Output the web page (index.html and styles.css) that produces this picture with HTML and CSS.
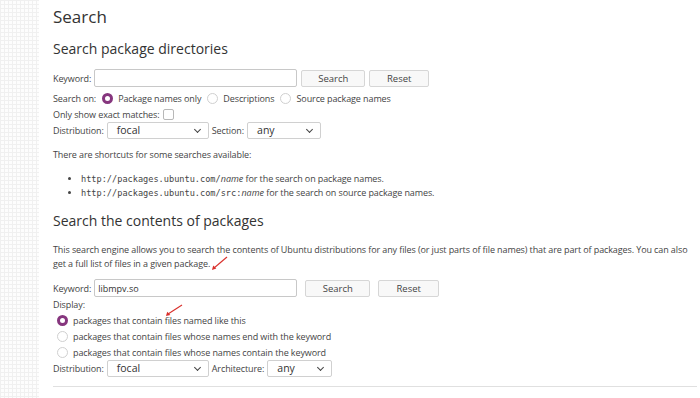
FILE: index.html
```html
<!DOCTYPE html>
<html lang="en">
<head>
    <meta charset="UTF-8">
    <title>Ubuntu – Package Search</title>
    <link rel="stylesheet" href="styles.css">
</head>
<body>
    <div class="side"></div>

    <div class="content">
        <h1>Search</h1>

        <h2>Search package directories</h2>
        <form class="search-form">
            <div class="row first">
                <label>Keyword:</label>
                <input type="text" class="keyword">
                <button type="button" class="btn">Search</button>
                <button type="button" class="btn reset">Reset</button>
            </div>
            <div class="row">
                <span>Search on:</span>
                <span class="radio checked"></span><span>Package names only</span>
                <span class="radio"></span><span>Descriptions</span>
                <span class="radio"></span><span>Source package names</span>
            </div>
            <div class="row">
                <span>Only show exact matches:</span>
                <span class="check"></span>
            </div>
            <div class="row">
                <span>Distribution:</span>
                <span class="select dist">focal<span class="chev"></span></span>
                <span>Section:</span>
                <span class="select section">any<span class="chev"></span></span>
            </div>
        </form>

        <p class="note">There are shortcuts for some searches available:</p>
        <ul class="shortcuts">
            <li><code>http://packages.ubuntu.com/<i>name</i></code> for the search on package names.</li>
            <li><code>http://packages.ubuntu.com/src:<i>name</i></code> for the search on source package names.</li>
        </ul>

        <h2 class="second">Search the contents of packages</h2>
        <p class="intro">This search engine allows you to search the contents of Ubuntu distributions for any files (or just parts of file names) that are part of packages. You can also get a full list of files in a given package.</p>

        <form class="search-form contents">
            <div class="row first">
                <label>Keyword:</label>
                <input type="text" class="keyword" value="libmpv.so">
                <button type="button" class="btn wide">Search</button>
                <button type="button" class="btn wide">Reset</button>
            </div>
            <div class="row display">Display:</div>
            <div class="row opt"><span class="radio checked"></span><span>packages that contain files named like this</span></div>
            <div class="row opt"><span class="radio"></span><span>packages that contain files whose names end with the keyword</span></div>
            <div class="row opt"><span class="radio"></span><span>packages that contain files whose names contain the keyword</span></div>
            <div class="row">
                <span>Distribution:</span>
                <span class="select dist">focal<span class="chev"></span></span>
                <span>Architecture:</span>
                <span class="select arch">any<span class="chev"></span></span>
            </div>
        </form>

        <hr>

        <!-- red annotation arrows from the screenshot -->
        <svg class="arrow arrow-one" width="20" height="16" viewBox="0 0 20 16">
            <line x1="17" y1="1" x2="4" y2="12" stroke="#d9302c" stroke-width="1.1"/>
            <path d="M2 14 L3.2 9.5 L6.3 12.6 Z" fill="#d9302c"/>
        </svg>
        <svg class="arrow arrow-two" width="20" height="14" viewBox="0 0 20 14">
            <line x1="18" y1="1" x2="4" y2="10" stroke="#d9302c" stroke-width="1.1"/>
            <path d="M2 12 L3.2 7.8 L6.4 10.9 Z" fill="#d9302c"/>
        </svg>
    </div>
</body>
</html>
```

FILE: styles.css
```css
body {
    margin: 0;
    display: flex;
    min-height: 398px;
    font-family: "Open Sans", "Noto Sans", sans-serif;
    font-size: 9px;
    letter-spacing: -0.1px;
    color: #444;
    background-color: #fff;
}
.side {
    width: 39px;
    flex-shrink: 0;
    background-color: #fdfdfd;
    background-image: linear-gradient(#f0f0f0 1px, transparent 1px),
                      linear-gradient(90deg, #f0f0f0 1px, transparent 1px);
    background-size: 4px 4px;
}
.content {
    position: relative;
    flex: 1;
    padding: 0 3px 0 14px;
}
h1 {
    font-size: 17px;
    font-weight: normal;
    letter-spacing: 0;
    margin: 6px 0 0;
    line-height: 22px;
    color: #333;
}
h2 {
    font-size: 14px;
    font-weight: normal;
    letter-spacing: 0;
    margin: 11px 0 0;
    line-height: 20px;
    color: #333;
}
.search-form {
    margin-top: 9px;
}
.row {
    display: flex;
    align-items: center;
    gap: 3px;
    height: 16px;
}
.row.first {
    height: 20px;
    margin-bottom: 2px;
}
.keyword {
    width: 203px;
    height: 18px;
    box-sizing: border-box;
    border: 1px solid #c8c8c8;
    border-radius: 2px;
    font-family: inherit;
    font-size: 9px;
    color: #333;
    padding: 0 3px;
    margin: 0;
}
.btn {
    width: 64px;
    height: 17px;
    box-sizing: border-box;
    border: 1px solid #d6d6d6;
    border-radius: 2px;
    background-color: #f8f8f8;
    font-family: inherit;
    font-size: 9.5px;
    color: #444;
    padding: 0;
    margin: 0 0 0 1px;
}
.btn.reset {
    width: 60px;
}
.radio {
    width: 11px;
    height: 11px;
    box-sizing: border-box;
    border: 1px solid #d0d0d0;
    border-radius: 50%;
    margin: 0 2px 0 3px;
    flex-shrink: 0;
}
.radio.checked {
    border: 3.5px solid #86367e;
    background-color: #fff;
}
.check {
    width: 11px;
    height: 11px;
    box-sizing: border-box;
    border: 1px solid #b8b8b8;
    border-radius: 2px;
    margin-left: 1px;
}
.select {
    position: relative;
    height: 17px;
    box-sizing: border-box;
    border: 1px solid #d0d0d0;
    border-radius: 2px;
    display: flex;
    align-items: center;
    padding-left: 9px;
    font-size: 10.5px;
    letter-spacing: 0;
    color: #333;
}
.select .chev {
    position: absolute;
    right: 8px;
    top: 4px;
    width: 4px;
    height: 4px;
    border-right: 1.2px solid #444;
    border-bottom: 1.2px solid #444;
    transform: rotate(45deg);
}
.dist {
    width: 102px;
}
.section {
    width: 74px;
}
.arch {
    width: 65px;
}
.note {
    margin: 10px 0 0;
}
.shortcuts {
    margin: 11px 0 0;
    padding-left: 28px;
    line-height: 14px;
}
.shortcuts li::marker {
    font-size: 8px;
}
code {
    font-family: "DejaVu Sans Mono", monospace;
    font-size: 8.6px;
    letter-spacing: 0;
}
code i {
    font-family: "Open Sans", sans-serif;
    font-size: 9px;
}
h2.second {
    margin-top: 11px;
}
.intro {
    margin: 12px 0 0;
    line-height: 14px;
}
.contents {
    margin-top: 8px;
}
.contents .row.first {
    height: 18px;
    margin-bottom: 0;
}
.contents .row .btn.wide {
    width: 65px;
    margin-left: 5px;
}
.contents .row .btn.wide + .btn.wide {
    width: 61px;
}
.row.display {
    height: 15px;
}
.row.opt {
    gap: 0;
}
.row.opt .radio {
    margin-left: 4px;
    margin-right: 5px;
}
hr {
    border: none;
    border-top: 1px solid #e0e0e0;
    margin: 10px 0 0;
}
.arrow {
    position: absolute;
}
.arrow-one {
    left: 171px;
    top: 256px;
}
.arrow-two {
    left: 125px;
    top: 304px;
}
```
